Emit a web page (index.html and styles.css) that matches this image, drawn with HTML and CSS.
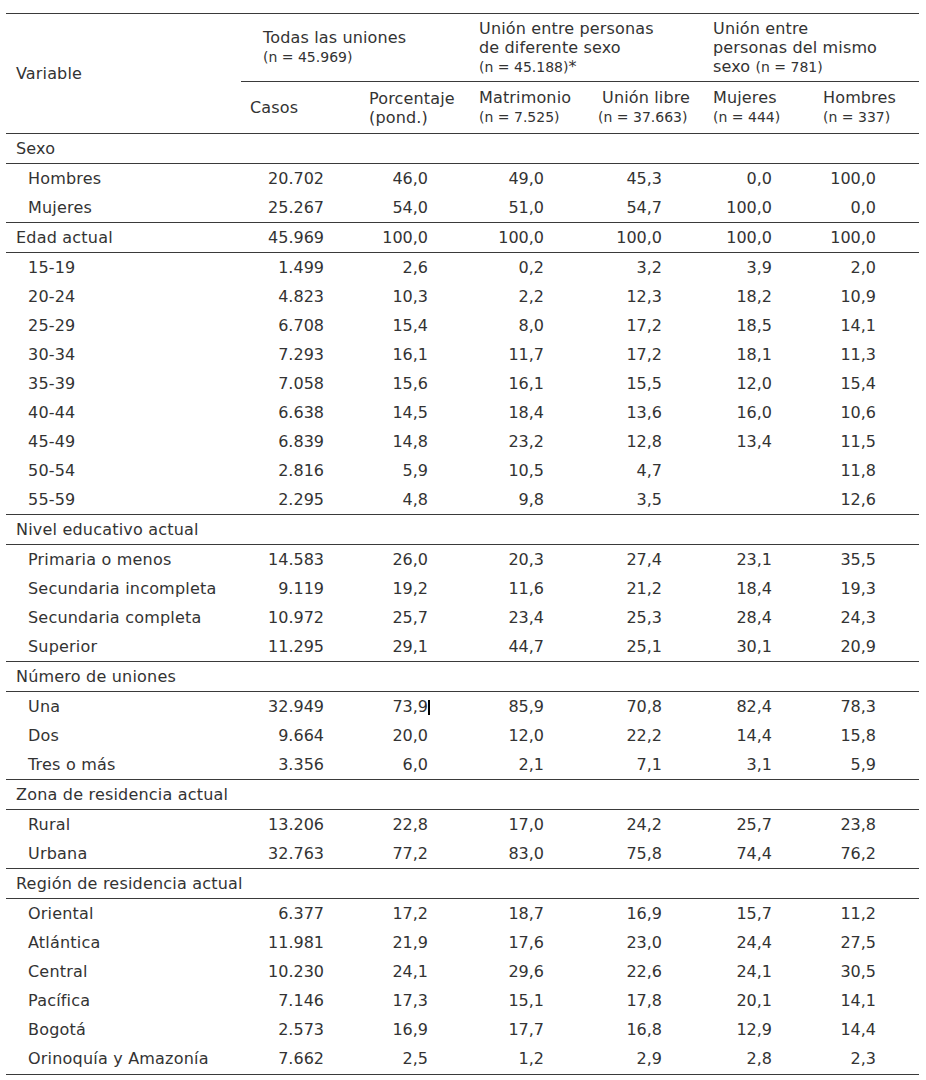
FILE: index.html
```html
<!DOCTYPE html>
<html lang="es">
<head>
<meta charset="utf-8">
<title>Tabla de uniones</title>
<link rel="stylesheet" href="styles.css">
</head>
<body>
<table class="data">
  <colgroup>
    <col class="c-var"><col class="c-casos"><col class="c-pct"><col class="c-mat"><col class="c-lib"><col class="c-muj"><col class="c-hom">
  </colgroup>
  <thead>
    <tr class="h1">
      <th rowspan="2" class="var-head">Variable</th>
      <th colspan="2" class="grp grp-todas">Todas las uniones<br><span class="n">(n = 45.969)</span></th>
      <th colspan="2" class="grp">Unión entre personas<br>de diferente sexo<br><span class="n">(n = 45.188)</span>*</th>
      <th colspan="2" class="grp">Unión entre<br>personas del mismo<br>sexo <span class="n">(n = 781)</span></th>
    </tr>
    <tr class="h2">
      <th class="sub">Casos</th>
      <th class="sub">Porcentaje<br>(pond.)</th>
      <th class="sub">Matrimonio<br><span class="n">(n = 7.525)</span></th>
      <th class="sub sub-lib">Unión libre<br><span class="n">(n = 37.663)</span></th>
      <th class="sub">Mujeres<br><span class="n">(n = 444)</span></th>
      <th class="sub">Hombres<br><span class="n">(n = 337)</span></th>
    </tr>
  </thead>
  <tbody>
    <tr class="sec"><td colspan="7">Sexo</td></tr>
    <tr><td class="lbl">Hombres</td><td>20.702</td><td>46,0</td><td>49,0</td><td>45,3</td><td>0,0</td><td>100,0</td></tr>
    <tr><td class="lbl">Mujeres</td><td>25.267</td><td>54,0</td><td>51,0</td><td>54,7</td><td>100,0</td><td>0,0</td></tr>
    <tr class="sec tot"><td>Edad actual</td><td>45.969</td><td>100,0</td><td>100,0</td><td>100,0</td><td>100,0</td><td>100,0</td></tr>
    <tr><td class="lbl">15-19</td><td>1.499</td><td>2,6</td><td>0,2</td><td>3,2</td><td>3,9</td><td>2,0</td></tr>
    <tr><td class="lbl">20-24</td><td>4.823</td><td>10,3</td><td>2,2</td><td>12,3</td><td>18,2</td><td>10,9</td></tr>
    <tr><td class="lbl">25-29</td><td>6.708</td><td>15,4</td><td>8,0</td><td>17,2</td><td>18,5</td><td>14,1</td></tr>
    <tr><td class="lbl">30-34</td><td>7.293</td><td>16,1</td><td>11,7</td><td>17,2</td><td>18,1</td><td>11,3</td></tr>
    <tr><td class="lbl">35-39</td><td>7.058</td><td>15,6</td><td>16,1</td><td>15,5</td><td>12,0</td><td>15,4</td></tr>
    <tr><td class="lbl">40-44</td><td>6.638</td><td>14,5</td><td>18,4</td><td>13,6</td><td>16,0</td><td>10,6</td></tr>
    <tr><td class="lbl">45-49</td><td>6.839</td><td>14,8</td><td>23,2</td><td>12,8</td><td>13,4</td><td>11,5</td></tr>
    <tr><td class="lbl">50-54</td><td>2.816</td><td>5,9</td><td>10,5</td><td>4,7</td><td></td><td>11,8</td></tr>
    <tr><td class="lbl">55-59</td><td>2.295</td><td>4,8</td><td>9,8</td><td>3,5</td><td></td><td>12,6</td></tr>
    <tr class="sec"><td colspan="7">Nivel educativo actual</td></tr>
    <tr><td class="lbl">Primaria o menos</td><td>14.583</td><td>26,0</td><td>20,3</td><td>27,4</td><td>23,1</td><td>35,5</td></tr>
    <tr><td class="lbl">Secundaria incompleta</td><td>9.119</td><td>19,2</td><td>11,6</td><td>21,2</td><td>18,4</td><td>19,3</td></tr>
    <tr><td class="lbl">Secundaria completa</td><td>10.972</td><td>25,7</td><td>23,4</td><td>25,3</td><td>28,4</td><td>24,3</td></tr>
    <tr><td class="lbl">Superior</td><td>11.295</td><td>29,1</td><td>44,7</td><td>25,1</td><td>30,1</td><td>20,9</td></tr>
    <tr class="sec"><td colspan="7">Número de uniones</td></tr>
    <tr><td class="lbl">Una</td><td>32.949</td><td>73,9<span class="caret"></span></td><td>85,9</td><td>70,8</td><td>82,4</td><td>78,3</td></tr>
    <tr><td class="lbl">Dos</td><td>9.664</td><td>20,0</td><td>12,0</td><td>22,2</td><td>14,4</td><td>15,8</td></tr>
    <tr><td class="lbl">Tres o más</td><td>3.356</td><td>6,0</td><td>2,1</td><td>7,1</td><td>3,1</td><td>5,9</td></tr>
    <tr class="sec"><td colspan="7">Zona de residencia actual</td></tr>
    <tr><td class="lbl">Rural</td><td>13.206</td><td>22,8</td><td>17,0</td><td>24,2</td><td>25,7</td><td>23,8</td></tr>
    <tr><td class="lbl">Urbana</td><td>32.763</td><td>77,2</td><td>83,0</td><td>75,8</td><td>74,4</td><td>76,2</td></tr>
    <tr class="sec"><td colspan="7">Región de residencia actual</td></tr>
    <tr><td class="lbl">Oriental</td><td>6.377</td><td>17,2</td><td>18,7</td><td>16,9</td><td>15,7</td><td>11,2</td></tr>
    <tr><td class="lbl">Atlántica</td><td>11.981</td><td>21,9</td><td>17,6</td><td>23,0</td><td>24,4</td><td>27,5</td></tr>
    <tr><td class="lbl">Central</td><td>10.230</td><td>24,1</td><td>29,6</td><td>22,6</td><td>24,1</td><td>30,5</td></tr>
    <tr><td class="lbl">Pacífica</td><td>7.146</td><td>17,3</td><td>15,1</td><td>17,8</td><td>20,1</td><td>14,1</td></tr>
    <tr><td class="lbl">Bogotá</td><td>2.573</td><td>16,9</td><td>17,7</td><td>16,8</td><td>12,9</td><td>14,4</td></tr>
    <tr class="last"><td class="lbl">Orinoquía y Amazonía</td><td>7.662</td><td>2,5</td><td>1,2</td><td>2,9</td><td>2,8</td><td>2,3</td></tr>
  </tbody>
</table>
</body>
</html>
```
FILE: styles.css
```css
html, body {
  margin: 0;
  padding: 0;
  background: #ffffff;
}

body {
  padding: 13px 0 0 6px;
  font-family: "DejaVu Sans", Verdana, sans-serif;
  font-size: 16px;
  color: #333333;
}

.data {
  border-collapse: collapse;
  table-layout: fixed;
  width: 913px;
  line-height: 19px;
}

.c-var { width: 235px; }
.c-casos { width: 119px; }
.c-pct { width: 110px; }
.c-mat { width: 119px; }
.c-lib { width: 115px; }
.c-muj { width: 110px; }
.c-hom { width: 105px; }

.data th {
  font-weight: normal;
  text-align: left;
  vertical-align: middle;
  padding: 0 0 0 9px;
  letter-spacing: 0.15px;
}

.h1 th {
  border-top: 1px solid #3a3a3a;
  height: 67px;
}

.h1 .grp {
  border-bottom: 1px solid #3a3a3a;
}

.h1 .grp-todas {
  padding-left: 22px;
}

.var-head {
  padding-left: 10px !important;
  border-bottom: 1px solid #3a3a3a;
}

.h2 th {
  height: 51px;
  border-bottom: 1px solid #3a3a3a;
}

.sub-lib {
  text-indent: 4px;
}

.n {
  font-size: 14px;
  letter-spacing: 0;
}

.data td {
  padding: 0;
  height: 29.03px;
  text-align: right;
  vertical-align: middle;
  white-space: nowrap;
}

.data td:nth-child(2) { padding-right: 36px; }
.data td:nth-child(3) { padding-right: 42px; }
.data td:nth-child(4) { padding-right: 45px; }
.data td:nth-child(5) { padding-right: 42px; }
.data td:nth-child(6) { padding-right: 42px; }
.data td:nth-child(7) { padding-right: 43px; }

.data td.lbl {
  text-align: left;
  padding-left: 22px;
  letter-spacing: 0.2px;
}

.sec td {
  border-top: 1px solid #3a3a3a;
  border-bottom: 1px solid #3a3a3a;
}

.sec td:first-child {
  text-align: left;
  padding-left: 10px;
  letter-spacing: 0.2px;
}

.last td {
  border-bottom: 1px solid #3a3a3a;
}

.caret {
  display: inline-block;
  width: 2px;
  height: 15px;
  background: #000000;
  vertical-align: -3px;
  margin-right: -2px;
}
```
